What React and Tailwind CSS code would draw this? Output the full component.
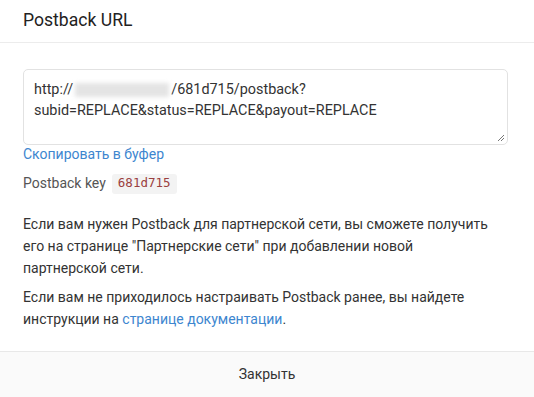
export default function App() {
  return (
    <div
      className="w-[534px] h-[397px] bg-white flex flex-col text-[#333]"
      style={{ fontFamily: 'Roboto, "Noto Sans", sans-serif' }}
    >
      {/* Header */}
      <div className="h-[43px] border-b border-[#ececec] pl-[23px] flex items-center">
        <h2 className="text-[17.6px] text-[#222] leading-none">Postback URL</h2>
      </div>

      {/* Body */}
      <div className="flex-1 pl-[23px] pr-[26px] pt-[26px]">
        <div className="relative h-[76px] border border-[#e2e2e2] rounded-[5px] px-[10px] pt-[9px] text-[14.4px] leading-[21px] text-[#333]">
          <div className="flex items-center">
            <span>http://</span>
            <span className="inline-block w-[94px] h-[14px] bg-[#e4e4e4] blur-[2px] mx-[2px]" />
            <span>/681d715/postback?</span>
          </div>
          <div>subid=REPLACE&amp;status=REPLACE&amp;payout=REPLACE</div>
          <svg className="absolute right-[2px] bottom-[2px]" width="8" height="8" viewBox="0 0 8 8">
            <path d="M7 1L1 7M7 4L4 7" stroke="#777" strokeWidth="1" />
          </svg>
        </div>

        <div className="text-[14px] leading-[18px] text-[#3d86cf]">Скопировать в буфер</div>

        <div className="mt-[10px] flex items-center gap-[6px] text-[14px] text-[#555]">
          <span>Postback key</span>
          <span
            className="bg-[#f3f3f3] rounded-[3px] px-[6px] h-[20px] flex items-center text-[12.5px] text-[#9b4040]"
            style={{ fontFamily: '"DejaVu Sans Mono", monospace' }}
          >
            681d715
          </span>
        </div>

        <p className="mt-[19px] w-[470px] text-[14px] leading-[22px] text-[#333]">
          Если вам нужен Postback для партнерской сети, вы сможете получить его на странице "Партнерские сети" при
          добавлении новой партнерской сети.
        </p>
        <p className="mt-[7px] w-[470px] text-[14px] leading-[22px] text-[#333]">
          Если вам не приходилось настраивать Postback ранее, вы найдете инструкции на{' '}
          <span className="text-[#3d86cf]">странице документации</span>.
        </p>
      </div>

      {/* Footer */}
      <div className="h-[46px] border-t border-[#e8e8e8] bg-[#fafafa] flex items-center justify-center">
        <span className="text-[14px] text-[#333]">Закрыть</span>
      </div>
    </div>
  );
}
